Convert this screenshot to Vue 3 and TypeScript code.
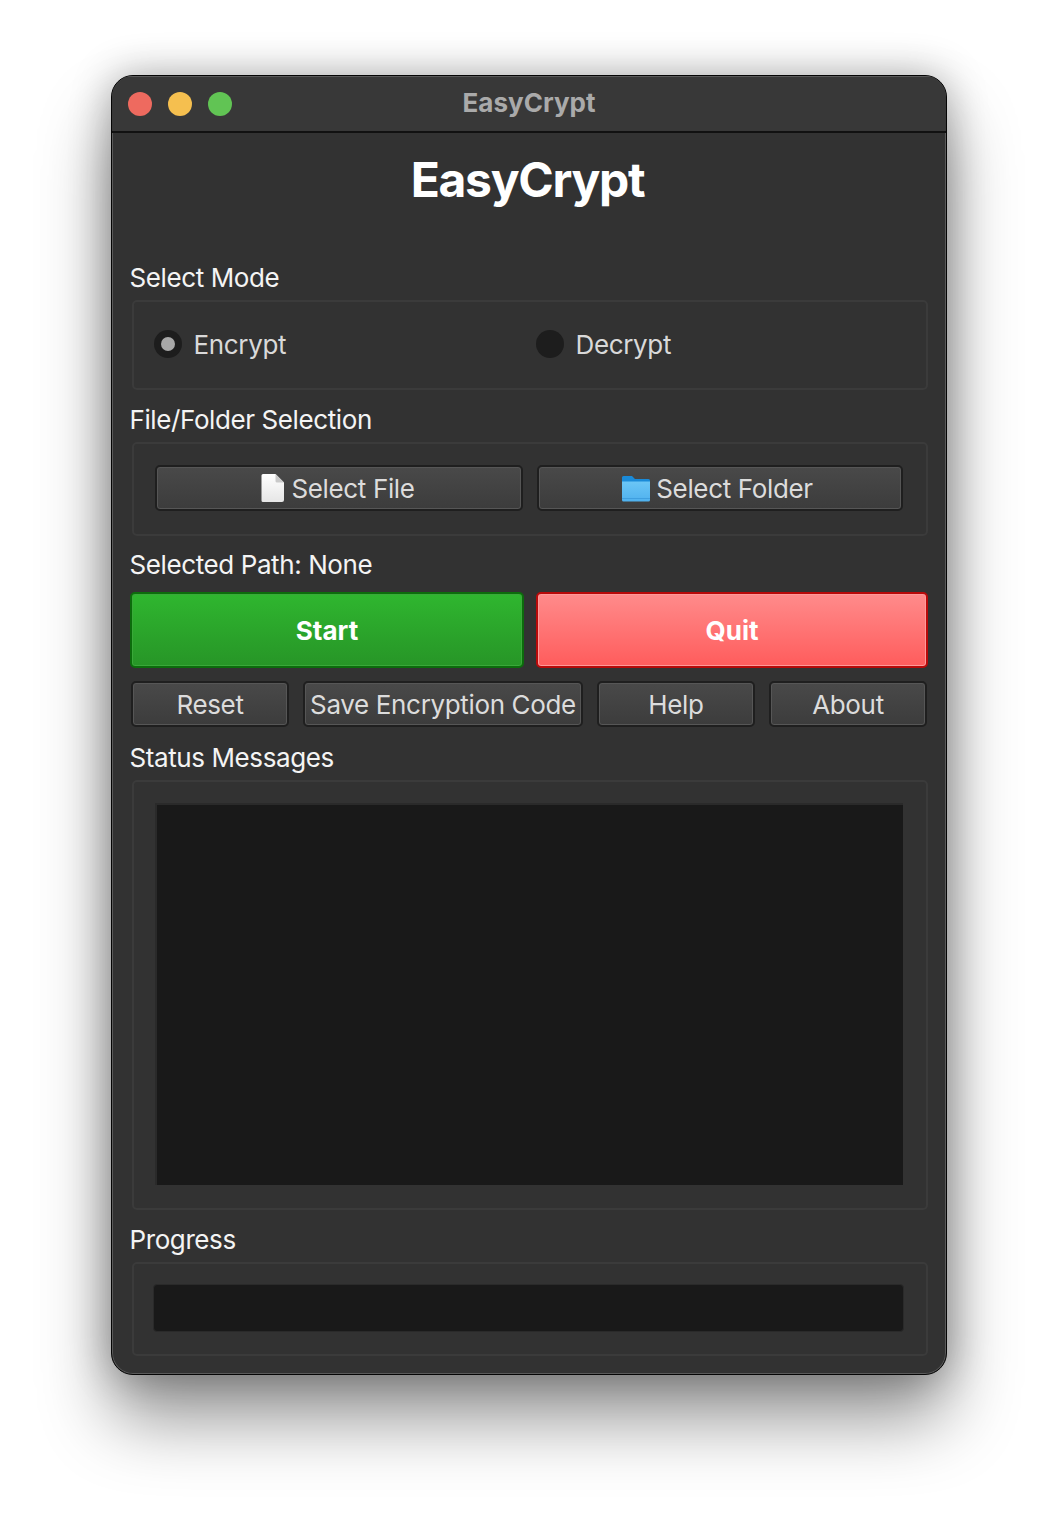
<template>
  <div class="page">
    <div class="window">
      <header class="titlebar">
        <div class="lights">
          <span class="light light--red" />
          <span class="light light--yellow" />
          <span class="light light--green" />
        </div>
        <span class="titlebar-name">EasyCrypt</span>
      </header>

      <main class="content">
        <h1 class="heading">EasyCrypt</h1>

        <div class="label label--first">Select Mode</div>
        <div class="group group--mode">
          <label v-for="mode in modes" :key="mode.name" class="radio">
            <span class="radio-dot" :class="{ 'radio-dot--on': mode.checked }" />
            <span>{{ mode.name }}</span>
          </label>
        </div>

        <div class="label">File/Folder Selection</div>
        <div class="group group--files">
          <button class="btn btn--select">
            <svg class="icon icon--file" width="24" height="30" viewBox="0 0 24 30">
              <defs>
                <linearGradient id="paper" x1="0" y1="0" x2="0" y2="1">
                  <stop offset="0" stop-color="#ffffff" />
                  <stop offset="1" stop-color="#e6e6e6" />
                </linearGradient>
              </defs>
              <path d="M2 1h12.500L23 9.500V27a2 2 0 0 1-2 2H2a1.500 1.500 0 0 1-1.500-1.500V2.500A1.500 1.500 0 0 1 2 1z" fill="url(#paper)" />
              <path d="M14.500 1L23 9.500h-7a1.500 1.500 0 0 1-1.500-1.500z" fill="#c9c9c9" />
            </svg>
            Select File
          </button>
          <button class="btn btn--select">
            <svg class="icon icon--folder" width="28" height="27" viewBox="0 0 28 27">
              <defs>
                <linearGradient id="folder" x1="0" y1="0" x2="0" y2="1">
                  <stop offset="0" stop-color="#6cc6f6" />
                  <stop offset="1" stop-color="#4fb1ee" />
                </linearGradient>
              </defs>
              <path d="M1.500 1h8.500l3 3h13.500a1.500 1.500 0 0 1 1.500 1.500V12H0V2.500A1.500 1.500 0 0 1 1.500 1z" fill="#1a8ad8" />
              <path d="M0 6.500h28V25a1.500 1.500 0 0 1-1.500 1.500h-25A1.500 1.500 0 0 1 0 25z" fill="url(#folder)" />
              <rect y="23" width="28" height="1" fill="#3f9fdf" />
            </svg>
            Select Folder
          </button>
        </div>

        <div class="label label--path">Selected Path: None</div>
        <div class="actions">
          <button class="action action--start">Start</button>
          <button class="action action--quit">Quit</button>
        </div>
        <div class="tools">
          <button v-for="tool in tools" :key="tool" class="btn">{{ tool }}</button>
        </div>

        <div class="label label--status">Status Messages</div>
        <div class="group group--status">
          <div class="status-box" />
        </div>

        <div class="label">Progress</div>
        <div class="group group--progress">
          <div class="progress-track" />
        </div>
      </main>
    </div>
  </div>
</template>

<script setup lang="ts">
const modes = [
  { name: 'Encrypt', checked: true },
  { name: 'Decrypt', checked: false },
]
const tools = ['Reset', 'Save Encryption Code', 'Help', 'About']
</script>

<style>
html,
body {
  margin: 0;
  background: #fff;
  overflow: hidden;
}
</style>

<style scoped>
.page {
  width: 1058px;
  height: 1522px;
  padding-top: 75px;
  box-sizing: border-box;
  font-family: Inter, "Liberation Sans", sans-serif;
  -webkit-font-smoothing: antialiased;
}

.window {
  width: 836px;
  height: 1300px;
  margin-left: 111px;
  box-sizing: border-box;
  border: 1px solid #050505;
  border-radius: 22px;
  background: #323232;
  box-shadow: inset 0 0 0 1px #5a5a5a, 0 44px 70px rgba(0, 0, 0, 0.42), 0 0 40px rgba(0, 0, 0, 0.3);
  overflow: hidden;
}

.titlebar {
  position: relative;
  height: 57px;
  box-sizing: border-box;
  display: flex;
  align-items: center;
  justify-content: center;
  background: #383838;
  border-bottom: 2px solid #111;
  box-shadow: inset 0 1px 0 #5a5a5a;
}

.lights {
  position: absolute;
  left: 16px;
  top: 16px;
  display: flex;
  gap: 16px;
}

.light {
  width: 24px;
  height: 24px;
  border-radius: 50%;
}

.light--red { background: #ee6a5f; }
.light--yellow { background: #f5bf4f; }
.light--green { background: #61c454; }

.titlebar-name {
  font-size: 26px;
  font-weight: 700;
  color: #aaa;
  letter-spacing: 0;
  margin-top: -3px;
}

.content {
  padding: 0 18px;
  display: flex;
  flex-direction: column;
}

.heading {
  margin: 16px 0 0;
  padding-right: 3px;
  height: 62px;
  font-size: 48px;
  line-height: 62px;
  font-weight: 700;
  text-align: center;
  color: #fff;
  letter-spacing: -1.3px;
}

.label {
  height: 32px;
  margin: 14px 0 0 -0.5px;
  line-height: 32px;
  font-size: 26px;
  color: #f4f4f4;
  letter-spacing: -0.4px;
}

.label--first {
  margin-top: 51px;
}

.label--path {
  margin-top: 13px;
}

.label--status {
  margin-top: 15px;
}

.group {
  margin: 6px 0 0 2px;
  box-sizing: border-box;
  border: 2px solid #3b3b3b;
  border-radius: 5px;
}

.group--mode {
  height: 90px;
  display: grid;
  grid-template-columns: 382px 1fr;
  align-items: center;
  padding: 0 0 2px 20px;
}

.group--files {
  height: 94px;
  display: grid;
  grid-template-columns: 368px 366px;
  gap: 14px;
  align-items: start;
  padding: 21px 0 0 21px;
}

.group--status {
  height: 430px;
  padding: 21px 23px 23px 21px;
}

.group--progress {
  height: 94px;
  padding: 20px 22px 22px 19px;
}

.radio {
  display: flex;
  align-items: center;
  gap: 11.500px;
  font-size: 26px;
  color: #d9d9d9;
  letter-spacing: -0.35px;
}

.radio-dot {
  width: 28px;
  height: 28px;
  border-radius: 50%;
  background: #1d1d1d;
  position: relative;
}

.radio-dot--on::after {
  content: '';
  position: absolute;
  left: 7px;
  top: 7px;
  width: 14px;
  height: 14px;
  border-radius: 50%;
  background: #a8a8a8;
}

.btn {
  height: 46px;
  padding: 0;
  box-sizing: border-box;
  display: flex;
  align-items: center;
  justify-content: center;
  border: 2px solid #1f1f1f;
  border-radius: 5px;
  background: linear-gradient(180deg, #494949 0%, #3c3c3c 100%);
  box-shadow: inset 0 0 0 1px #565656;
  color: #dcdcdc;
  font-family: inherit;
  font-size: 26px;
  letter-spacing: -0.35px;
}

.icon {
  flex: none;
}

.icon--file {
  margin-left: -2px;
  margin-right: 6px;
}

.icon--folder {
  margin-left: -5px;
  margin-right: 6px;
}

.actions {
  margin-top: 11px;
  display: grid;
  grid-template-columns: 394px 392px;
  gap: 12px;
}

.action {
  height: 76px;
  padding: 0;
  box-sizing: border-box;
  border-radius: 5px;
  border: 2px solid;
  font-family: inherit;
  font-size: 26px;
  font-weight: 700;
  color: #fff;
  letter-spacing: 0;
}

.action--start {
  border-color: #0c6c0c;
  background: linear-gradient(180deg, #2fb62f 0%, #279527 100%);
  box-shadow: inset 0 0 0 1px #3aa83a;
}

.action--quit {
  border-color: #b80a0a;
  background: linear-gradient(180deg, #ff8b8b 0%, #ff5c5c 100%);
  box-shadow: inset 0 0 0 1px #ff9a9a;
}

.tools {
  margin: 13px 0 0 1px;
  display: grid;
  grid-template-columns: 158px 280px 158px 158px;
  gap: 14px;
}

.status-box {
  height: 100%;
  background: #191919;
  border-top: 2px solid #2a2a2a;
  border-left: 2px solid #2a2a2a;
  box-sizing: border-box;
}

.progress-track {
  height: 100%;
  box-sizing: border-box;
  border-radius: 4px;
  background: #191919;
  border: 1px solid #2a2a2a;
}
</style>
